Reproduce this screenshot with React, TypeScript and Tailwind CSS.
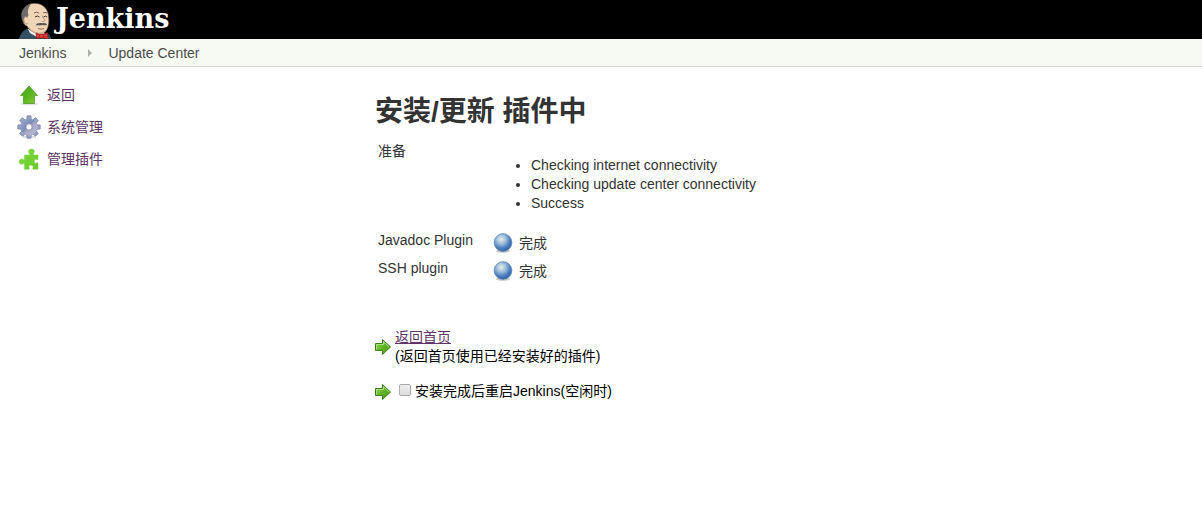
import type { ReactNode } from 'react';

function Butler() {
  return (
    <svg viewBox="0 0 34 39" className="h-[39px] w-[34px] shrink-0" aria-hidden="true">
      <path d="M1 39C2 34 5 31 9 28.500L15 31L25 34L30 34C32 35 33 37 33 39Z" fill="#335061" />
      <path d="M10 29L12 33L19 37L27 35L25 31Z" fill="#fff" />
      <path
        d="M5 18C3.500 10 8 4 15.500 3.300C23 2.800 28.500 7 30 13C31 17 31.500 23 30 27C28.500 31.500 24.500 34 20.500 33.500C15.500 33 11 30 9 26C6 25.500 4.500 22 5 18Z"
        fill="#f0d6b7"
        stroke="#4a3d35"
        strokeWidth=".7"
      />
      <path d="M11 27C14 31 18 32.500 22 32.500C26 32 28.500 29.500 29.500 26C29.500 31 26 34.500 21 34C16 33.500 12 31 11 27Z" fill="#d6b48e" />
      <path
        d="M13 3.800C7 5.500 3.500 10 3.300 15C3.200 17.500 3.800 20 5 22L6 17.500C7 16 8.500 16 9.200 17.500L10.500 15C9 11.500 10.500 7.500 13 3.800Z"
        fill="#6d6b6d"
      />
      <path d="M9.500 18C7.500 15.500 5.500 17.500 5.800 20.500C6.200 24 8.500 25 9.500 23" fill="#f0d6b7" stroke="#7c5a45" strokeWidth=".6" />
      <path d="M16 13Q18.500 11 21 13.200M25 13Q27 11.500 29 13" fill="none" stroke="#6b5647" strokeWidth=".9" />
      <path d="M17 17Q19.500 15 21.500 17M25.500 17Q27.500 15.200 29.200 17" fill="none" stroke="#3f322b" strokeWidth="1" />
      <path d="M24 15.500Q25.500 18.500 27 20.500Q26 22 24 21.500" fill="none" stroke="#a87f63" strokeWidth=".8" />
      <path d="M17.500 25.500C18.500 23 21.500 22.500 24.500 23.300C27 22.500 28.800 23.500 29 25C27 25.800 25 25 24 25C22 25.800 19.500 25 17.500 25.500Z" fill="#5d5552" />
      <path d="M20 28.500Q23 30 26 28.500" fill="none" stroke="#925f4b" strokeWidth=".9" />
      <path d="M18 33L23 35L29.500 32.500L30 39L23.500 37.500L18.500 39Z" fill="#d33833" stroke="#7d1815" strokeWidth=".6" />
      <path d="M21.800 34.300H25.200V38H21.800Z" fill="#ef3d3a" stroke="#7d1815" strokeWidth=".6" />
    </svg>
  );
}

function UpArrow() {
  return (
    <svg viewBox="0 0 24 24" className="size-6" aria-hidden="true">
      <defs>
        <linearGradient id="up" x1="0" y1="0" x2="1" y2="1">
          <stop stopColor="#3fa51d" />
          <stop offset=".5" stopColor="#59b51f" />
          <stop offset="1" stopColor="#8ccb3d" />
        </linearGradient>
      </defs>
      <ellipse cx="12" cy="21" rx="9" ry="1.500" fill="#e2e2e2" />
      <path d="M12 3L20.500 12.500H17.500V20.500H6.500V12.500H3.500Z" fill="url(#up)" stroke="#4f9a2a" strokeWidth=".8" strokeLinejoin="round" />
    </svg>
  );
}

const teeth = [0, 45, 90, 135, 180, 225, 270, 315];

function Gear() {
  return (
    <svg viewBox="0 0 24 24" className="size-6" aria-hidden="true">
      <defs>
        <linearGradient id="gear" gradientUnits="userSpaceOnUse" x1="3" y1="3" x2="21" y2="21">
          <stop stopColor="#a4acd0" />
          <stop offset=".45" stopColor="#7d8db9" />
          <stop offset=".55" stopColor="#a9aac8" />
          <stop offset="1" stopColor="#b9b9d5" />
        </linearGradient>
      </defs>
      <ellipse cx="12" cy="22" rx="7" ry="1.500" fill="#dedede" />
      <g fill="#97a2c5" stroke="#68759f" strokeWidth=".6">
        {teeth.map((angle) => (
          <path key={angle} d="M9.500 6L10 .8H14L14.500 6Z" transform={`rotate(${angle} 12 12)`} />
        ))}
      </g>
      <circle cx="12" cy="12" r="5.900" fill="none" stroke="url(#gear)" strokeWidth="5.400" />
      <circle cx="12" cy="12" r="3.200" fill="#fff" stroke="#68759f" strokeWidth=".8" />
    </svg>
  );
}

function Puzzle() {
  return (
    <svg viewBox="0 0 24 24" className="size-6" aria-hidden="true">
      <defs>
        <linearGradient id="puzzle" x1="0" y1="0" x2="1" y2="1">
          <stop stopColor="#7fdc3f" />
          <stop offset="1" stopColor="#6cc92c" />
        </linearGradient>
      </defs>
      <path
        d="M7.500 8H12.500C13.300 7 11.500 6 11.500 4.500C11.500 1.300 17.300 1.300 17.300 4.500C17.300 6 15.700 7 16.500 8H21V12.500C20 13.300 19.300 12 18.300 12.300C16.800 12.800 16.800 15.700 18.300 16.200C19.300 16.500 20 15.200 21 16V22.300H16C15.200 21.500 16.500 20.500 16 19.300C15.200 17.800 12.500 17.800 11.900 19.300C11.600 20.500 12.800 21.500 12 22.300H7.500V17C6.500 16 5.500 17.500 4.200 17.300C1.500 16.800 1.500 12.500 4.200 12C5.500 11.700 6.500 13.300 7.500 12.500Z"
        fill="url(#puzzle)"
        stroke="#78d23c"
        strokeWidth=".5"
      />
    </svg>
  );
}

function Ball() {
  return (
    <svg viewBox="0 0 20 20" className="size-5 shrink-0" aria-hidden="true">
      <defs>
        <radialGradient id="ball" cx=".4" cy=".32" r=".7">
          <stop stopColor="#e6efe8" />
          <stop offset=".35" stopColor="#a3c1dd" />
          <stop offset=".7" stopColor="#4d80bd" />
          <stop offset="1" stopColor="#2e60a2" />
        </radialGradient>
      </defs>
      <ellipse cx="10" cy="18" rx="7" ry="1.700" fill="#c9c9c9" />
      <circle cx="10" cy="9.500" r="8.900" fill="url(#ball)" stroke="#5f86b8" strokeWidth=".7" />
    </svg>
  );
}

function RightArrow() {
  return (
    <svg viewBox="0 0 16 16" className="size-4 shrink-0" aria-hidden="true">
      <defs>
        <linearGradient id="next" x1="0" y1="0" x2="1" y2="1">
          <stop stopColor="#a5dd6c" />
          <stop offset=".5" stopColor="#62b525" />
          <stop offset="1" stopColor="#429c16" />
        </linearGradient>
      </defs>
      <path d="M.5 4.500H7.500V.5L15.500 8L7.500 15.500V11.500H.5Z" fill="url(#next)" stroke="#3d7d20" strokeLinejoin="round" />
      <path d="M1.500 10.500V5.500H8.500V2.800L14 8" fill="none" stroke="#b8e58c" strokeWidth=".8" />
    </svg>
  );
}

function Task({ icon, children }: { icon: ReactNode; children: ReactNode }) {
  return (
    <li>
      <a href="#" className="flex h-8 items-center gap-1.5 text-[#5c3566]">
        {icon}
        {children}
      </a>
    </li>
  );
}

function PluginRow({ name }: { name: string }) {
  return (
    <tr className="h-7">
      <th scope="row" className="pl-[3px] text-left align-top font-normal">{name}</th>
      <td className="align-top">
        <div className="flex h-6 items-center gap-1.5">
          <Ball />
          完成
        </div>
      </td>
    </tr>
  );
}

export default function App() {
  return (
    <div className="min-h-screen bg-white font-['Liberation_Sans','Noto_Sans_CJK_SC',sans-serif] text-sm leading-[19px] text-[#333]">
      <header className="flex h-[39px] bg-black pl-[18px]">
        <a href="#" className="flex items-center gap-1 text-white">
          <Butler />
          <span className="pb-0.5 font-['DejaVu_Serif',serif] text-[27px] leading-8 font-bold">Jenkins</span>
        </a>
      </header>
      <nav aria-label="Breadcrumb" className="flex h-7 items-center border-b border-[#d3d7cf] bg-[#f6faf2] pt-px pl-[19px] text-[#4d4d4d]">
        <a href="#">Jenkins</a>
        <svg viewBox="0 0 4 8" className="mr-4 ml-[22px] h-2 w-1" aria-hidden="true">
          <path d="M0 0L4 4L0 8Z" fill="#b0b0b0" />
        </svg>
        <a href="#">Update Center</a>
      </nav>
      <div className="flex">
        <aside className="w-[375px] shrink-0 pt-3 pl-[17px]">
          <ul>
            <Task icon={<UpArrow />}>返回</Task>
            <Task icon={<Gear />}>系统管理</Task>
            <Task icon={<Puzzle />}>管理插件</Task>
          </ul>
        </aside>
        <main className="min-w-0 flex-1 pt-[25px] pr-5">
          <h1 className="text-[28px] leading-10 font-bold">安装/更新 插件中</h1>
          <table className="mt-2.5">
            <tbody>
              <tr className="h-[89px]">
                <th scope="row" className="w-[118px] pl-[3px] text-left align-top font-normal">准备</th>
                <td className="align-top">
                  <ul className="list-disc pt-3.5 pl-[38px]">
                    <li>Checking internet connectivity</li>
                    <li>Checking update center connectivity</li>
                    <li>Success</li>
                  </ul>
                </td>
              </tr>
              <PluginRow name="Javadoc Plugin" />
              <PluginRow name="SSH plugin" />
            </tbody>
          </table>
          <div className="mt-[41px] flex items-center gap-1 text-black">
            <RightArrow />
            <div>
              <a href="#" className="text-[#5c3566] underline">返回首页</a>
              <p>(返回首页使用已经安装好的插件)</p>
            </div>
          </div>
          <div className="mt-4 flex items-center text-black">
            <RightArrow />
            <label className="ml-2 flex items-center gap-1">
              <input
                type="checkbox"
                className="mb-1 size-3 appearance-none rounded-xs border border-[#aaa] bg-linear-to-b from-[#eee] to-[#ddd] checked:bg-[#555]"
              />
              安装完成后重启Jenkins(空闲时)
            </label>
          </div>
        </main>
      </div>
    </div>
  );
}
